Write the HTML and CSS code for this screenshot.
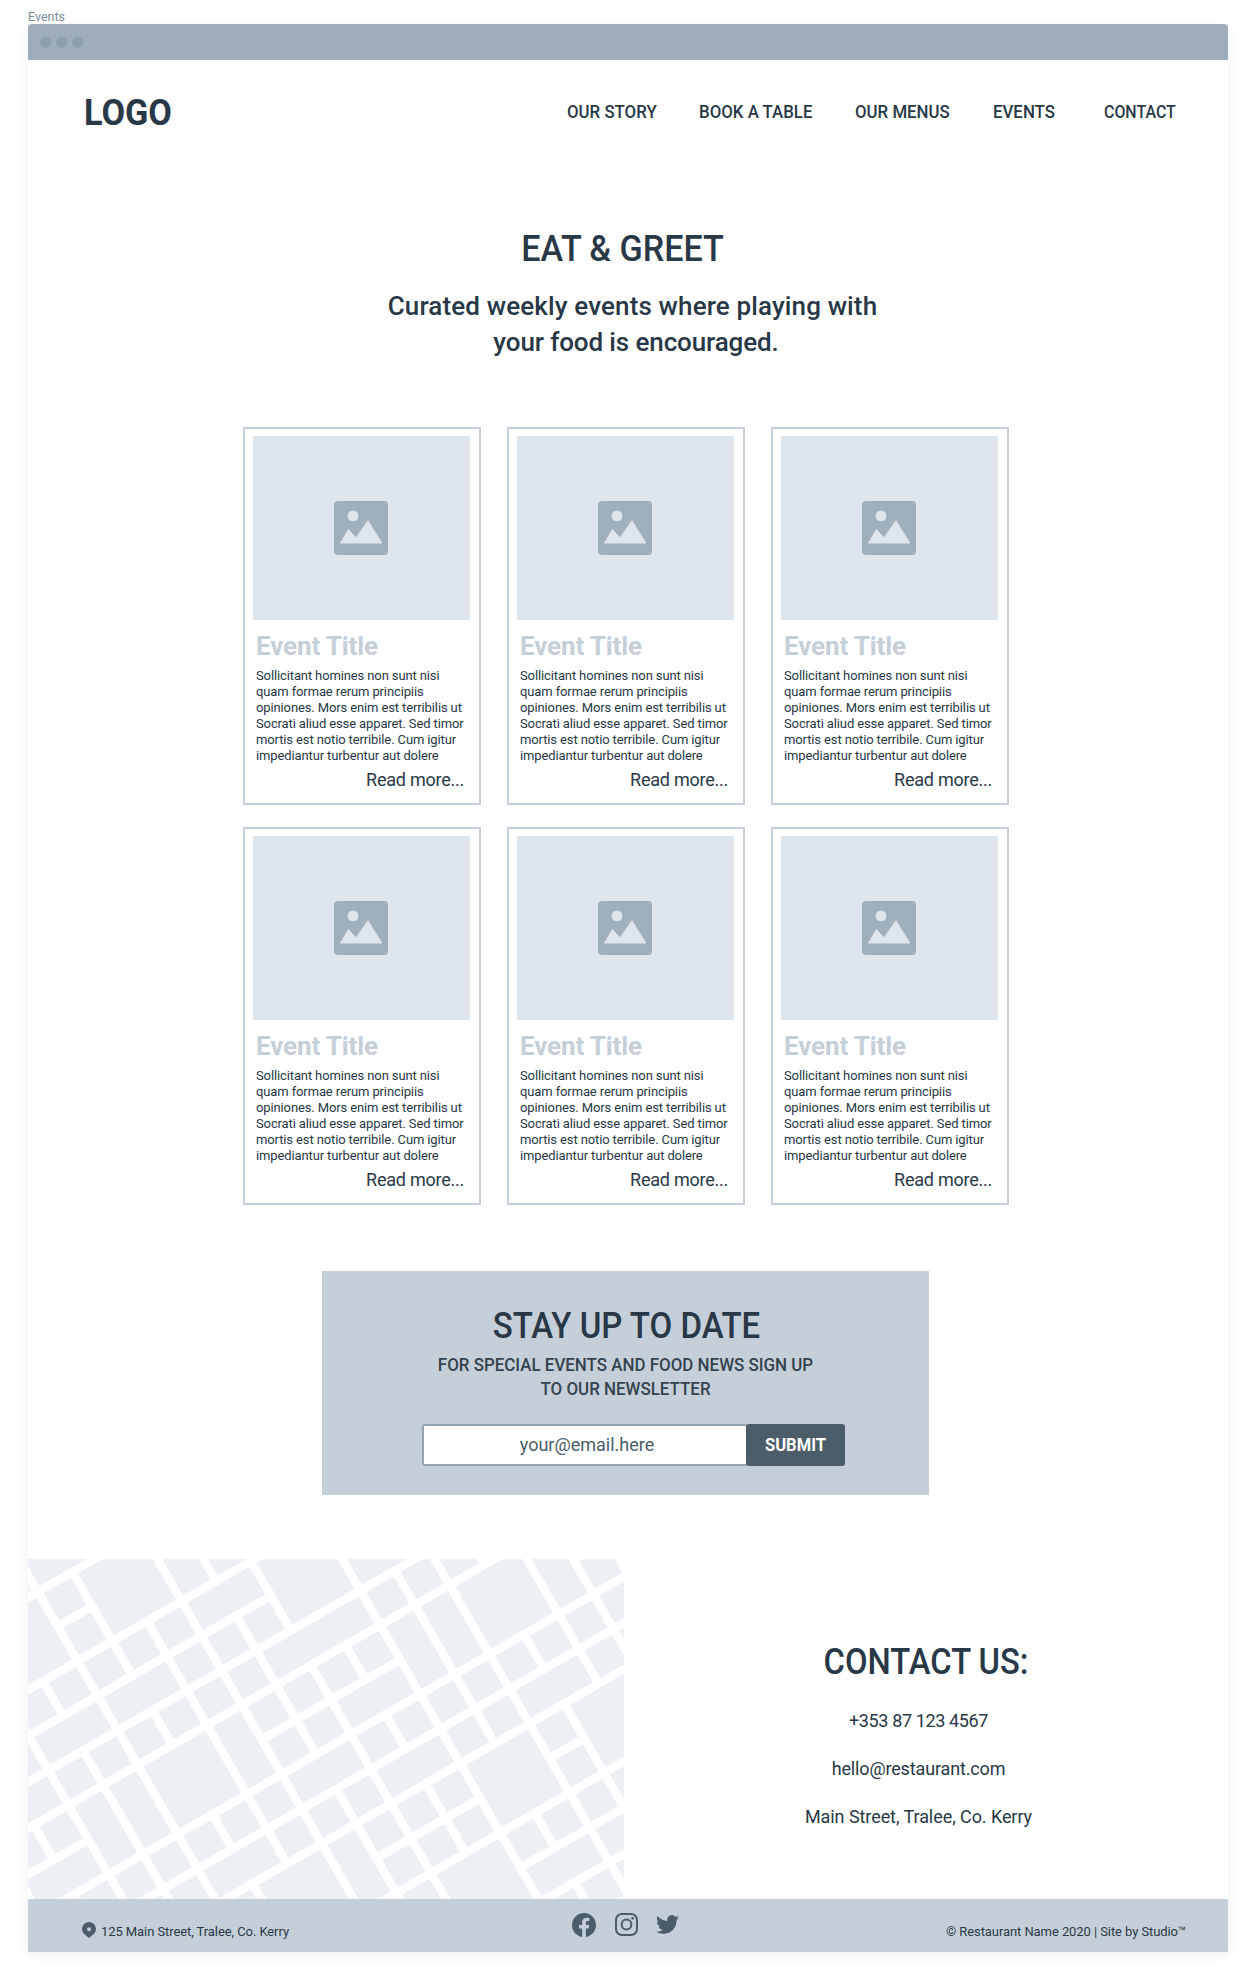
FILE: index.html
```html
<!DOCTYPE html>
<html lang="en">
<head>
<meta charset="utf-8">
<title>Events</title>
<link rel="stylesheet" href="styles.css">
</head>
<body>
<svg class="defs" width="0" height="0" aria-hidden="true">
  <symbol id="picture" viewBox="0 0 54 54">
    <path fill="#9fafbb" fill-rule="evenodd" d="M4 0h46a4 4 0 0 1 4 4v46a4 4 0 0 1-4 4H4a4 4 0 0 1-4-4V4a4 4 0 0 1 4-4zM19 9.500a5.400 5.400 0 1 0 0 10.800 5.400 5.400 0 0 0 0-10.800zM6.800 42.500h40.600c.7 0 1-.5.6-1.100L34.500 20c-.4-.6-.8-.6-1.200 0L22 36.300l-6.700-7.600c-.5-.6-.9-.5-1.300.1L6.200 41.400c-.4.600-.1 1.100.6 1.100z"/>
  </symbol>
</svg>
<div class="label">Events</div>
<div class="frame">
  <div class="bar"><i></i><i></i><i></i></div>
  <header class="header">
    <div class="logo">LOGO</div>
    <nav class="nav"><a>OUR STORY</a><a>BOOK A TABLE</a><a>OUR MENUS</a><a>EVENTS</a><a class="nav-contact">CONTACT</a></nav>
  </header>
  <section class="hero">
    <h1>EAT &amp; GREET</h1>
    <p class="lead"><span class="lead-first">Curated weekly events where playing with</span><span class="lead-second">your food is encouraged.</span></p>
  </section>
  <section class="cards">
    <article class="card"><div class="thumb"><svg width="54" height="54"><use href="#picture"/></svg></div><h2>Event Title</h2><p>Sollicitant homines non sunt nisi<br>quam formae rerum principiis<br>opiniones. Mors enim est terribilis ut<br>Socrati aliud esse apparet. Sed timor<br>mortis est notio terribile. Cum igitur<br>impediantur turbentur aut dolere</p><a class="more">Read more...</a></article>
    <article class="card"><div class="thumb"><svg width="54" height="54"><use href="#picture"/></svg></div><h2>Event Title</h2><p>Sollicitant homines non sunt nisi<br>quam formae rerum principiis<br>opiniones. Mors enim est terribilis ut<br>Socrati aliud esse apparet. Sed timor<br>mortis est notio terribile. Cum igitur<br>impediantur turbentur aut dolere</p><a class="more">Read more...</a></article>
    <article class="card"><div class="thumb"><svg width="54" height="54"><use href="#picture"/></svg></div><h2>Event Title</h2><p>Sollicitant homines non sunt nisi<br>quam formae rerum principiis<br>opiniones. Mors enim est terribilis ut<br>Socrati aliud esse apparet. Sed timor<br>mortis est notio terribile. Cum igitur<br>impediantur turbentur aut dolere</p><a class="more">Read more...</a></article>
    <article class="card"><div class="thumb"><svg width="54" height="54"><use href="#picture"/></svg></div><h2>Event Title</h2><p>Sollicitant homines non sunt nisi<br>quam formae rerum principiis<br>opiniones. Mors enim est terribilis ut<br>Socrati aliud esse apparet. Sed timor<br>mortis est notio terribile. Cum igitur<br>impediantur turbentur aut dolere</p><a class="more">Read more...</a></article>
    <article class="card"><div class="thumb"><svg width="54" height="54"><use href="#picture"/></svg></div><h2>Event Title</h2><p>Sollicitant homines non sunt nisi<br>quam formae rerum principiis<br>opiniones. Mors enim est terribilis ut<br>Socrati aliud esse apparet. Sed timor<br>mortis est notio terribile. Cum igitur<br>impediantur turbentur aut dolere</p><a class="more">Read more...</a></article>
    <article class="card"><div class="thumb"><svg width="54" height="54"><use href="#picture"/></svg></div><h2>Event Title</h2><p>Sollicitant homines non sunt nisi<br>quam formae rerum principiis<br>opiniones. Mors enim est terribilis ut<br>Socrati aliud esse apparet. Sed timor<br>mortis est notio terribile. Cum igitur<br>impediantur turbentur aut dolere</p><a class="more">Read more...</a></article>
  </section>
  <section class="newsletter">
    <h2>STAY UP TO DATE</h2>
    <p>FOR SPECIAL EVENTS AND FOOD NEWS SIGN UP<br>TO OUR NEWSLETTER</p>
    <div class="form"><div class="field">your@email.here</div><div class="submit"><span>SUBMIT</span></div></div>
  </section>
  <section class="contact">
    <!-- City blocks on a unit grid, tilted 30 degrees; the white stroke forms the streets -->
    <svg class="map" width="596" height="340" viewBox="0 0 596 340">
      <g transform="rotate(-30) translate(-8 33.300) scale(40)">
        <path fill="#eceff4" stroke="#fff" stroke-width=".21" d="
M-1-1h1v1h-1zM0-1h2v1h-2zM0 0h1v1h-1zM0 1h1v1h-1zM1 0h2v2h-2zM-2 0h2v2h-2zM3 0h1v2h-1zM4 1h2v1h-2z
M-2 2h1v1h-1zM-1 2h1v1h-1zM0 2h1v1h-1zM1 2h1v1h-1zM2 2h1v1h-1zM3 2h2v1h-2zM5 2h2v2h-2z
M-3 3h1v1h-1zM-2 3h2v1h-2zM0 3h2v1h-2zM2 3h1v1h-1zM3 3h1v1h-1zM4 3h1v1h-1zM7 3h2v1h-2z
M-4 4h2v1h-2zM-2 4h1v1h-1zM-1 4h1v1h-1zM0 4h1v1h-1zM1 4h1v1h-1zM2 4h1v1h-1zM3 4h1v1h-1zM4 4h3v1h-3zM7 4h1v1h-1zM8 4h1v1h-1zM9 4h1v1h-1zM10 4h1v1h-1z
M-4 5h1v1h-1zM-3 5h1v1h-1zM-2 5h1v2h-1zM-1 5h1v2h-1zM0 5h2v2h-2zM2 5h1v2h-1zM3 5h1v1h-1zM4 5h1v1h-1zM5 5h1v1h-1zM6 5h1v1h-1zM7 5h1v2h-1zM8 5h1v2h-1zM9 5h2v2h-2zM11 5h1v2h-1z
M-5 6h1v1h-1zM-4 6h2v1h-2zM3 6h1v1h-1zM4 6h1v1h-1zM5 6h2v1h-2zM12 6h1v1h-1z
M-3 7h1v1h-1zM-2 7h1v1h-1zM-1 7h1v1h-1zM0 7h1v1h-1zM1 7h1v1h-1zM2 7h1v1h-1zM3 7h2v1h-2zM5 7h1v1h-1zM6 7h1v1h-1zM7 7h1v1h-1zM8 7h1v1h-1zM9 7h1v1h-1zM10 7h1v1h-1zM11 7h1v1h-1zM12 7h1v1h-1z
M-2 8h1v1h-1zM-1 8h1v1h-1zM0 8h2v1h-2zM2 8h1v1h-1zM3 8h1v1h-1zM4 8h1v1h-1zM5 8h2v1h-2zM7 8h1v1h-1zM8 8h1v1h-1zM9 8h2v1h-2zM11 8h1v1h-1zM12 8h1v1h-1z
M0 9h1v1h-1zM1 9h2v2h-2zM3 9h1v2h-1zM4 9h1v1h-1zM4 10h1v1h-1zM5 9h1v1h-1zM5 10h1v1h-1zM6 9h1v1h-1zM6 10h1v1h-1zM7 9h2v2h-2zM9 9h1v1h-1zM9 10h1v1h-1zM10 9h2v2h-2z
M4 11h1v1h-1zM5 11h2v2h-2zM7 11h1v1h-1zM8 11h1v1h-1zM9 11h1v1h-1zM10 11h1v1h-1z
M7 12h2v1h-2zM9 12h1v1h-1zM7 13h1v1h-1zM8 13h1v1h-1zM9 13h1v1h-1z"/>
      </g>
    </svg>
    <div class="details">
      <h2>CONTACT US:</h2>
      <p class="phone">+353 87 123 4567</p>
      <p class="email">hello@restaurant.com</p>
      <p class="street">Main Street, Tralee, Co. Kerry</p>
    </div>
  </section>
  <footer class="footer">
    <div class="address">
      <svg width="14" height="16" viewBox="0 0 14 16"><path fill="#4b5c6a" fill-rule="evenodd" d="M7 0a7 7 0 0 1 7 7c0 3.200-1.800 4.700-3.700 6.300L7 16l-3.300-2.700C1.800 11.700 0 10.200 0 7a7 7 0 0 1 7-7zm0 5.200a2 2 0 1 0 0 4 2 2 0 0 0 0-4z"/></svg>
      <span>125 Main Street, Tralee, Co. Kerry</span>
    </div>
    <div class="social">
      <svg width="24" height="24" viewBox="0 0 24 24"><path fill="#4b5c6a" d="M24 12.070C24 5.400 18.630 0 12 0S0 5.400 0 12.070C0 18.100 4.390 23.100 10.130 24v-8.440H7.080v-3.490h3.050V9.410c0-3.020 1.790-4.700 4.530-4.700 1.310 0 2.690.24 2.690.24v2.970h-1.510c-1.490 0-1.960.93-1.960 1.890v2.260h3.330l-.53 3.490h-2.800V24C19.610 23.100 24 18.100 24 12.070z"/></svg>
      <svg width="23" height="23" viewBox="0 0 24 24" fill="none" stroke="#4b5c6a" stroke-width="2.100"><rect x="1.050" y="1.050" width="21.900" height="21.900" rx="6"/><circle cx="12" cy="12" r="5.100"/><circle cx="18.400" cy="5.600" r="1.400" fill="#4b5c6a" stroke="none"/></svg>
      <svg width="23" height="23" viewBox="0 0 24 24"><path fill="#4b5c6a" d="M23.950 4.570a10 10 0 0 1-2.820.77 4.960 4.960 0 0 0 2.160-2.720c-.95.55-2 .95-3.130 1.180a4.920 4.920 0 0 0-8.380 4.480C7.690 8.100 4.070 6.130 1.640 3.160a4.820 4.820 0 0 0-.67 2.480c0 1.710.87 3.210 2.190 4.100a4.900 4.900 0 0 1-2.230-.62v.06a4.920 4.920 0 0 0 3.950 4.830 5 5 0 0 1-2.210.08 4.940 4.940 0 0 0 4.600 3.420A9.870 9.870 0 0 1 0 19.540a13.990 13.990 0 0 0 7.550 2.210c9.050 0 14-7.500 14-13.990 0-.21 0-.42-.02-.63a9.940 9.940 0 0 0 2.420-2.560z"/></svg>
    </div>
    <div class="copyright">© Restaurant Name 2020 | Site by Studio™</div>
  </footer>
</div>
</body>
</html>
```
FILE: styles.css
```css
* { box-sizing: border-box; }
body { margin: 0; padding: 8px 24px 29px 28px; background: #fff; color: #293847; font: 400 18px/24px Roboto, sans-serif; }
h1, h2, p { margin: 0; }
.defs { display: none; }
.label { padding-top: 1px; font: 400 12.500px/15px Roboto, sans-serif; color: #788b9b; }
.frame { width: 1200px; height: 1928px; border-radius: 4px 4px 0 0; box-shadow: 0 4px 12px rgba(0, 0, 0, .06); }
.bar { display: flex; align-items: center; gap: 4px; height: 36px; padding-left: 12px; background: #9eadb9; border-radius: 4px 4px 0 0; }
.bar i { width: 12px; height: 12px; border-radius: 50%; background: #8e9eac; }

.header { display: flex; justify-content: space-between; align-items: center; height: 104px; padding: 0 52px 0 56px; }
.logo { padding-top: 1px; font: 700 36px/40px Roboto, sans-serif; transform: scaleX(.95); transform-origin: left; }
.nav { display: grid; grid-template-columns: 132px 155.500px 138.500px 111px 72px; white-space: nowrap; font-weight: 500; }
.nav a { transform: scaleX(.935); transform-origin: left; }
.nav .nav-contact { justify-self: start; transform: scaleX(.885); }

.hero { padding-top: 65px; text-align: center; }
.hero h1 { margin-right: 11px; font: 500 36px/40px Roboto, sans-serif; transform: scaleX(.945); }
.lead { margin-top: 19px; font-size: 26px; font-weight: 500; line-height: 36px; }
.lead span { display: block; }
.lead-first { padding-left: 9px; letter-spacing: .14px; }
.lead-second { padding-left: 16px; letter-spacing: -.120px; }

.cards { display: grid; grid-template-columns: repeat(3, 238px); gap: 22px 26px; padding: 67px 0 0 215px; }
.card { display: flex; flex-direction: column; height: 378px; padding: 7px 8px; border: 2px solid #c4cfd9; }
.thumb { display: flex; align-items: center; justify-content: center; width: 217px; height: 184px; padding: 0 1px 1px 0; background: #dfe5ed; }
.card h2 { margin: 10px 0 0 3px; font: 700 26px/32px Roboto, sans-serif; letter-spacing: -.120px; color: #c4cfd9; }
.card p { margin: 6px 0 0 3px; font-size: 13px; line-height: 16px; letter-spacing: -.120px; white-space: nowrap; }
.more { align-self: flex-end; margin: 4px 7px 0 0; letter-spacing: -.240px; }

.newsletter { width: 607px; height: 224px; margin: 66px 0 0 294px; padding-top: 35px; background: #c4cfd9; text-align: center; }
.newsletter h2 { margin-left: 2px; font: 500 36px/40px Roboto, sans-serif; transform: scaleX(.917); }
.newsletter p { margin-top: 7px; font-weight: 500; color: #34434f; transform: scaleX(.94); }
.form { display: flex; margin: 23px 0 0 100px; }
.field { width: 326px; height: 42px; margin-right: -2px; padding-left: 4px; border: 2px solid #95a6b3; border-radius: 3px; background: #fff; line-height: 38px; color: #4b5c6a; }
.submit { z-index: 1; width: 99px; height: 42px; border-radius: 3px; background: #4b5c6a; color: #fff; font-weight: 700; line-height: 42px; }
.submit span { display: block; transform: scaleX(.92); }

.contact { display: flex; margin-top: 64px; height: 340px; }
.map { display: block; flex: none; }
.details { flex: 1; padding-top: 83px; text-align: center; }
.details h2 { margin-bottom: 15px; font: 500 36px/40px Roboto, sans-serif; transform: scaleX(.91); }
.details p { padding-right: 15px; line-height: 48px; }
.phone { letter-spacing: -.380px; }
.email { letter-spacing: -.150px; }
.street { letter-spacing: -.070px; }

.footer { display: flex; height: 53px; padding: 0 42px 0 54px; background: #c4cfd9; font-size: 13px; line-height: 16px; letter-spacing: -.080px; }
.address { display: flex; gap: 5px; width: 490px; padding-top: 25px; }
.address svg { margin-top: -2px; }
.social { display: flex; gap: 18px; padding-top: 14px; }
.social svg:first-child { margin-right: 1px; }
.copyright { margin-left: auto; padding-top: 25px; }
```
